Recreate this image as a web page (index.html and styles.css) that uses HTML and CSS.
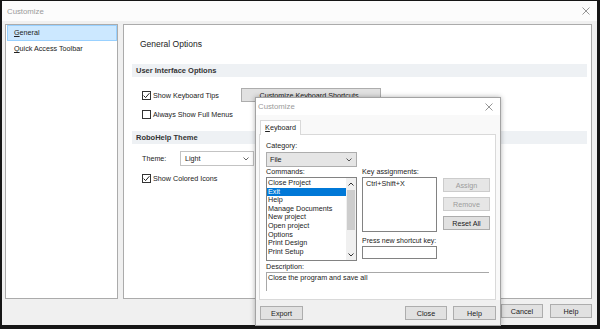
FILE: index.html
```html
<!DOCTYPE html>
<html>
<head>
  <title>Customize</title>
  <link rel="stylesheet" href="styles.css">
</head>
<body>
  <div class="screen">
    <div class="window">
      <div class="titlebar">
        <span>Customize</span>
        <svg class="close-x" width="8" height="8" viewBox="0 0 8 8"><path d="M0.5 0.5 L7.5 7.5 M7.5 0.5 L0.5 7.5" stroke="#8a8a8a" stroke-width="0.9"/></svg>
      </div>
      <div class="body">
        <div class="nav">
          <div class="nav-item selected"><u>G</u>eneral</div>
          <div class="nav-item"><u>Q</u>uick Access Toolbar</div>
        </div>
        <div class="pane">
          <div class="pane-title">General Options</div>
          <div class="section-bar">User Interface Options</div>
          <div class="options">
            <div class="option-row first">
              <label class="check-label">
                <span class="checkbox checked"><svg width="9" height="9" viewBox="0 0 9 9"><path d="M1.6 4.6 L3.6 6.6 L7.4 2.2" fill="none" stroke="#222" stroke-width="1"/></svg></span>
                Show Keyboard Tips
              </label>
              <button class="btn wide">Customize Keyboard Shortcuts..</button>
            </div>
            <div class="option-row">
              <label class="check-label">
                <span class="checkbox"></span>
                Always Show Full Menus
              </label>
            </div>
          </div>
          <div class="section-bar second">RoboHelp Theme</div>
          <div class="options">
            <div class="option-row theme-row">
              <span class="theme-label">Theme:</span>
              <div class="select light">
                <span>Light</span>
                <svg width="6" height="4" viewBox="0 0 6 4"><path d="M0.5 0.5 L3 3 L5.5 0.5" fill="none" stroke="#555" stroke-width="0.9"/></svg>
              </div>
            </div>
            <div class="option-row">
              <label class="check-label">
                <span class="checkbox checked"><svg width="9" height="9" viewBox="0 0 9 9"><path d="M1.6 4.6 L3.6 6.6 L7.4 2.2" fill="none" stroke="#222" stroke-width="1"/></svg></span>
                Show Colored Icons
              </label>
            </div>
          </div>
        </div>
      </div>
      <div class="footer">
        <button class="btn">Cancel</button>
        <button class="btn">Help</button>
      </div>
    </div>

    <div class="dialog">
      <div class="dialog-title">
        <span>Customize</span>
        <svg width="8" height="8" viewBox="0 0 8 8"><path d="M0.5 0.5 L7.5 7.5 M7.5 0.5 L0.5 7.5" stroke="#8a8a8a" stroke-width="0.9"/></svg>
      </div>
      <div class="tabs">
        <div class="tab"><u>K</u>eyboard</div>
      </div>
      <div class="tab-panel">
        <div class="field-label">Category:</div>
        <div class="select category">
          <span>File</span>
          <svg width="6" height="4" viewBox="0 0 6 4"><path d="M0.5 0.5 L3 3 L5.5 0.5" fill="none" stroke="#444" stroke-width="0.9"/></svg>
        </div>
        <div class="columns">
          <div class="col-commands">
            <div class="field-label">Commands:</div>
            <div class="listbox">
              <div class="items">
                <div class="item">Close Project</div>
                <div class="item active">Exit</div>
                <div class="item">Help</div>
                <div class="item">Manage Documents</div>
                <div class="item">New project</div>
                <div class="item">Open project</div>
                <div class="item">Options</div>
                <div class="item">Print Design</div>
                <div class="item">Print Setup</div>
              </div>
              <div class="scrollbar">
                <div class="arrow"><svg width="6" height="4" viewBox="0 0 6 4"><path d="M0.5 3.5 L3 1 L5.5 3.5" fill="none" stroke="#333" stroke-width="1"/></svg></div>
                <div class="thumb"></div>
                <div class="track"></div>
                <div class="arrow"><svg width="6" height="4" viewBox="0 0 6 4"><path d="M0.5 0.5 L3 3 L5.5 0.5" fill="none" stroke="#333" stroke-width="1"/></svg></div>
              </div>
            </div>
          </div>
          <div class="col-keys">
            <div class="field-label">Key assignments:</div>
            <div class="keybox">Ctrl+Shift+X</div>
            <div class="field-label press">Press new shortcut key:</div>
            <div class="keyinput"></div>
          </div>
          <div class="col-buttons">
            <button class="btn disabled">Assign</button>
            <button class="btn disabled">Remove</button>
            <button class="btn">Reset All</button>
          </div>
        </div>
        <div class="field-label desc-label">Description:</div>
        <div class="description">Close the program and save all</div>
      </div>
      <div class="dialog-footer">
        <button class="btn export">Export</button>
        <button class="btn close">Close</button>
        <button class="btn help">Help</button>
      </div>
    </div>
  </div>
</body>
</html>
```

FILE: styles.css
```css
* {
  box-sizing: border-box;
}
body {
  margin: 0;
  font-family: "Liberation Sans", Arial, sans-serif;
  font-size: 7.2px;
  color: #1a1a1a;
}
.screen {
  position: relative;
  width: 600px;
  height: 329px;
  background: #161616;
  padding: 1px 3px 4px 2px;
  overflow: hidden;
}
.window {
  height: 100%;
  display: flex;
  flex-direction: column;
  background: #f0f0f0;
}
.titlebar {
  height: 20px;
  background: #fcfcfc;
  display: flex;
  align-items: center;
  justify-content: space-between;
  padding: 0 7px 0 5px;
  color: #9a9a9a;
  font-size: 7.8px;
}
.body {
  flex: 1;
  display: flex;
  gap: 5px;
  padding: 3px 5px 0 3px;
}
.nav {
  width: 113px;
  background: #fff;
  border: 1px solid #ababab;
  padding-left: 1px;
}
.nav-item {
  width: 110px;
  height: 16px;
  line-height: 14px;
  padding-left: 6px;
  border: 1px solid transparent;
  color: #222;
}
.nav-item.selected {
  background: #cce8ff;
  border-color: #99d1ff;
}
.nav-item u, .tab u {
  text-decoration-thickness: 0.5px;
}
.pane {
  flex: 1;
  background: #fff;
  border: 1px solid #ababab;
  padding: 0 4px 0 8px;
}
.pane-title {
  height: 39px;
  line-height: 39px;
  padding-left: 8px;
  font-size: 8.5px;
  color: #222;
}
.section-bar {
  height: 13px;
  line-height: 13px;
  background: #eef1f4;
  padding-left: 4px;
  font-weight: bold;
  font-size: 7.5px;
  color: #333;
}
.section-bar.second {
  margin-top: 10px;
}
.options {
  padding-left: 10px;
}
.option-row {
  display: flex;
  align-items: center;
  height: 14px;
  margin-top: 5px;
}
.option-row.first {
  margin-top: 11px;
}
.option-row.theme-row {
  height: 15px;
  margin-top: 7px;
}
.check-label {
  width: 99px;
  display: flex;
  align-items: center;
  gap: 2px;
  color: #222;
}
.checkbox {
  width: 9px;
  height: 9px;
  border: 1px solid #333;
  background: #fff;
  display: flex;
  align-items: center;
  justify-content: center;
}
.checkbox svg {
  flex: none;
}
.theme-label {
  width: 38px;
}
.select {
  height: 15px;
  display: flex;
  align-items: center;
  justify-content: space-between;
  padding: 0 4px 0 4px;
  border: 1px solid #c3c3c3;
  background: #fff;
}
.select.light {
  width: 74px;
}
.select.category {
  width: 91px;
  margin-top: 1px;
  background: #e5e5e5;
  border-color: #adadad;
  padding-left: 3px;
}
.btn {
  height: 14px;
  padding: 0;
  border: 1px solid #adadad;
  background: #e1e1e1;
  font-family: inherit;
  font-size: 7.2px;
  color: #1a1a1a;
  display: flex;
  align-items: center;
  justify-content: center;
}
.btn.wide {
  width: 140px;
}
.btn.disabled {
  color: #9c9c9c;
  background: #e6e6e6;
  border-color: #cccccc;
}
.footer {
  height: 26px;
  display: flex;
  justify-content: flex-end;
  gap: 7px;
  padding: 5px 5px 0 0;
}
.footer .btn {
  width: 42px;
}
.dialog {
  position: absolute;
  left: 255px;
  top: 97px;
  width: 246px;
  height: 229px;
  border: 1px solid #a3a3a3;
  box-shadow: 0 0 5px rgba(0, 0, 0, 0.3);
  background: #f9f9f9;
  display: flex;
  flex-direction: column;
}
.dialog-title {
  height: 17px;
  background: #fff;
  display: flex;
  align-items: center;
  justify-content: space-between;
  padding: 0 7px 0 2px;
  color: #9a9a9a;
  font-size: 7.8px;
}
.tabs {
  display: flex;
  margin-top: 5px;
  padding-left: 4px;
  margin-bottom: -1px;
}
.tab {
  position: relative;
  width: 41px;
  height: 15px;
  line-height: 14px;
  text-align: center;
  background: #fff;
  border: 1px solid #d9d9d9;
  border-bottom: none;
  color: #222;
}
.tab-panel {
  height: 166px;
  margin: 0 4px 0 3px;
  border: 1px solid #d9d9d9;
  background: #fff;
  padding: 6px 0 0 6px;
}
.field-label {
  height: 10px;
  line-height: 10px;
  color: #222;
  white-space: nowrap;
}
.columns {
  display: flex;
}
.col-commands {
  width: 91px;
}
.listbox {
  height: 84px;
  border: 1px solid #828282;
  display: flex;
  overflow: hidden;
}
.items {
  flex: 1;
  padding-top: 1px;
  overflow: hidden;
}
.item {
  height: 8.6px;
  line-height: 8.6px;
  padding-left: 1px;
  white-space: nowrap;
  color: #222;
}
.item.active {
  background: #0078d7;
  color: #fff;
}
.scrollbar {
  width: 10px;
  background: #f0f0f0;
  display: flex;
  flex-direction: column;
}
.arrow {
  height: 11px;
  display: flex;
  align-items: center;
  justify-content: center;
}
.thumb {
  height: 40px;
  margin: 1px 1px 0;
  background: #cdcdcd;
}
.track {
  flex: 1;
}
.col-keys {
  width: 75px;
  margin-left: 5px;
}
.keybox {
  height: 55px;
  border: 1px solid #828282;
  padding: 2px 3px;
  line-height: 8px;
  color: #222;
}
.field-label.press {
  margin-top: 4px;
  font-size: 7px;
}
.keyinput {
  height: 13px;
  border: 1px solid #828282;
  background: #fff;
}
.col-buttons {
  width: 47px;
  margin-left: 6px;
  padding-top: 11px;
  display: flex;
  flex-direction: column;
  gap: 5px;
}
.col-buttons .btn {
  width: 47px;
}
.desc-label {
  margin-top: 1px;
}
.description {
  width: 223px;
  height: 19px;
  border-top: 1px solid #a8a8a8;
  border-left: 1px solid #a8a8a8;
  padding-left: 1px;
  line-height: 10px;
  color: #222;
}
.dialog-footer {
  flex: 1;
  display: flex;
  gap: 6px;
  padding: 6px 4px 0 4px;
  background: #f0f0f0;
}
.btn.export {
  width: 43px;
}
.btn.close {
  width: 42px;
  margin-left: auto;
}
.btn.help {
  width: 43px;
}
```
